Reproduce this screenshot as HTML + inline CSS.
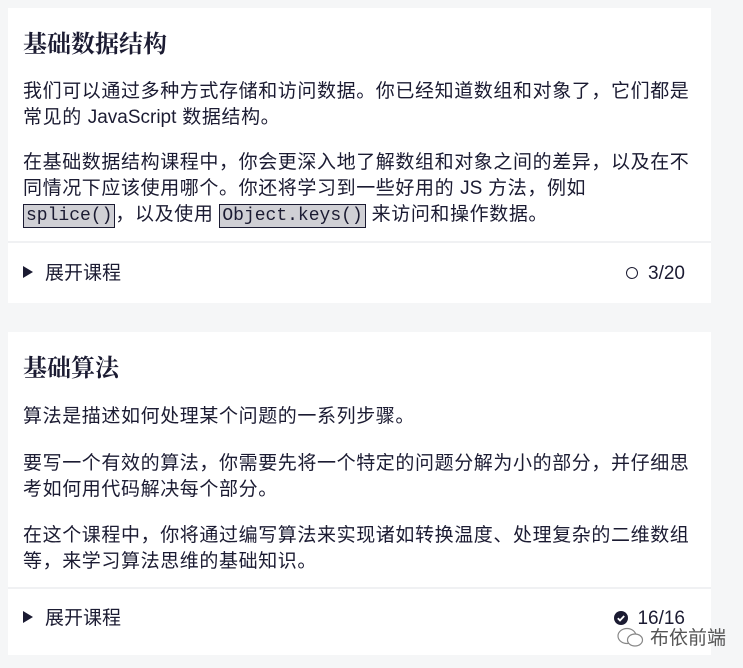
<!DOCTYPE html>
<html><head><meta charset="utf-8"><style>
body{margin:0;background:#f5f6f7;width:743px;height:668px;overflow:hidden;font-family:"Liberation Sans","Noto Sans CJK SC",sans-serif;color:#1b1b32;}
.card{position:absolute;left:8px;width:703px;background:#fff;}
.in{padding:0 10px 0 15px;}
h2{font-family:"Liberation Serif","Noto Serif CJK SC",serif;font-weight:700;font-size:24px;margin:0;height:34px;line-height:34px;}
p{font-size:19px;line-height:26px;margin:0;letter-spacing:0.6px;}
.l{letter-spacing:0;}
code{font-family:"Liberation Mono","DejaVu Sans Mono",monospace;font-size:18px;letter-spacing:0;background:#d0d0d5;border:1px solid #1b1b32;padding:1px 2px;}
.sep{height:2px;background:#f0f1f3;}
.sum{font-size:19px;height:60px;line-height:60px;position:relative;padding-left:15px;}
.sum .r{position:absolute;right:26px;top:0;}
.tri{display:inline-block;width:0;height:0;border-left:10px solid #1b1b32;border-top:6px solid transparent;border-bottom:6px solid transparent;margin-right:12px;vertical-align:1px;}
.wm{position:absolute;left:616px;top:623px;font-size:19px;color:#555;}
</style></head><body>
<div class="card" style="top:8px;height:295px">
<div class="in">
<h2 style="margin-top:20px">基础数据结构</h2>
<p style="margin-top:17px">我们可以通过多种方式存储和访问数据。你已经知道数组和对象了，它们都是常见的 <span class="l">JavaScript</span> 数据结构。</p>
<p style="margin-top:19px">在基础数据结构课程中，你会更深入地了解数组和对象之间的差异，以及在不同情况下应该使用哪个。你还将学习到一些好用的 <span class="l">JS</span> 方法，例如 <code>splice()</code>，以及使用 <code>Object.keys()</code> 来访问和操作数据。</p>
</div>
<div class="sep" style="margin-top:12px"></div>
<div class="sum" style="line-height:62px"><span class="tri"></span>展开课程<span class="r"><span style="display:inline-block;width:10px;height:10px;border:1.5px solid #1b1b32;border-radius:50%;margin-right:10px;vertical-align:0"></span>3/20</span></div>
</div>
<div class="card" style="top:332px;height:323px">
<div class="in">
<h2 style="margin-top:20px">基础算法</h2>
<p style="margin-top:18px">算法是描述如何处理某个问题的一系列步骤。</p>
<p style="margin-top:21px">要写一个有效的算法，你需要先将一个特定的问题分解为小的部分，并仔细思考如何用代码解决每个部分。</p>
<p style="margin-top:20px">在这个课程中，你将通过编写算法来实现诸如转换温度、处理复杂的二维数组等，来学习算法思维的基础知识。</p>
</div>
<div class="sep" style="margin-top:12px"></div>
<div class="sum"><span class="tri"></span>展开课程<span class="r"><svg width="14" height="14" viewBox="0 0 14 14" style="margin-right:9px;vertical-align:-1px"><circle cx="7" cy="7" r="7" fill="#1b1b32"/><path d="M3.8 7.2l2.2 2.2 4.2-4.4" stroke="#fff" stroke-width="1.8" fill="none"/></svg>16/16</span></div>
</div>
<div class="wm"><svg width="30" height="22" viewBox="0 0 30 22" style="vertical-align:-5px;margin-right:4px"><ellipse cx="11" cy="9" rx="9" ry="7.5" fill="none" stroke="#888" stroke-width="1.2"/><ellipse cx="19" cy="13" rx="7.5" ry="6" fill="#fff" stroke="#888" stroke-width="1.2"/></svg>布依前端</div>
</body></html>
